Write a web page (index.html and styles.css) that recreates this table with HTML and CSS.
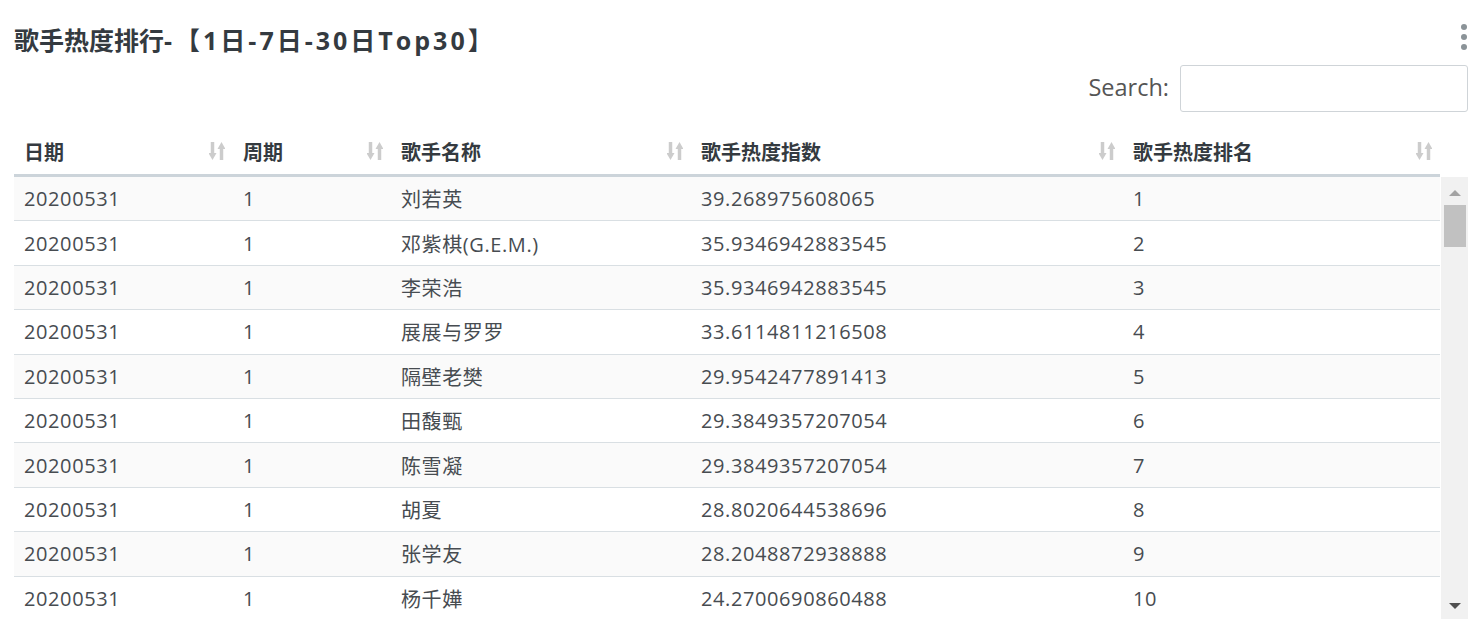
FILE: index.html
```html
<!DOCTYPE html>
<html lang="zh-CN">
<head>
<meta charset="utf-8">
<title>歌手热度排行</title>
<link rel="stylesheet" href="styles.css">
</head>
<body>
<div class="card">
  <div class="card-head">
    <h1 class="title">歌手热度排行<span class="title-range">-【1日-7日-30日Top30】</span></h1>
    <div class="kebab"><span></span><span></span><span></span></div>
  </div>
  <div class="search-row">
    <label class="search-label">Search:</label>
    <input class="search-input" type="text">
  </div>
  <div class="grid-head">
    <div class="hcell">日期<svg class="sort" viewBox="0 0 16 20"><path d="M3.5 1v12" /><path class="fill" d="M-0.5 12h8l-4 7z"/><path d="M12.5 19V7" /><path class="fill" d="M8.5 8h8l-4-7z"/></svg></div>
    <div class="hcell">周期<svg class="sort" viewBox="0 0 16 20"><path d="M3.5 1v12" /><path class="fill" d="M-0.5 12h8l-4 7z"/><path d="M12.5 19V7" /><path class="fill" d="M8.5 8h8l-4-7z"/></svg></div>
    <div class="hcell">歌手名称<svg class="sort" viewBox="0 0 16 20"><path d="M3.5 1v12" /><path class="fill" d="M-0.5 12h8l-4 7z"/><path d="M12.5 19V7" /><path class="fill" d="M8.5 8h8l-4-7z"/></svg></div>
    <div class="hcell">歌手热度指数<svg class="sort" viewBox="0 0 16 20"><path d="M3.5 1v12" /><path class="fill" d="M-0.5 12h8l-4 7z"/><path d="M12.5 19V7" /><path class="fill" d="M8.5 8h8l-4-7z"/></svg></div>
    <div class="hcell">歌手热度排名<svg class="sort" viewBox="0 0 16 20"><path d="M3.5 1v12" /><path class="fill" d="M-0.5 12h8l-4 7z"/><path d="M12.5 19V7" /><path class="fill" d="M8.5 8h8l-4-7z"/></svg></div>
  </div>
  <div class="body-wrap">
    <div class="rows">
      <div class="row odd"><div>20200531</div><div>1</div><div>刘若英</div><div>39.268975608065</div><div>1</div></div>
      <div class="row"><div>20200531</div><div>1</div><div>邓紫棋(G.E.M.)</div><div>35.9346942883545</div><div>2</div></div>
      <div class="row odd"><div>20200531</div><div>1</div><div>李荣浩</div><div>35.9346942883545</div><div>3</div></div>
      <div class="row"><div>20200531</div><div>1</div><div>展展与罗罗</div><div>33.6114811216508</div><div>4</div></div>
      <div class="row odd"><div>20200531</div><div>1</div><div>隔壁老樊</div><div>29.9542477891413</div><div>5</div></div>
      <div class="row"><div>20200531</div><div>1</div><div>田馥甄</div><div>29.3849357207054</div><div>6</div></div>
      <div class="row odd"><div>20200531</div><div>1</div><div>陈雪凝</div><div>29.3849357207054</div><div>7</div></div>
      <div class="row"><div>20200531</div><div>1</div><div>胡夏</div><div>28.8020644538696</div><div>8</div></div>
      <div class="row odd"><div>20200531</div><div>1</div><div>张学友</div><div>28.2048872938888</div><div>9</div></div>
      <div class="row"><div>20200531</div><div>1</div><div>杨千嬅</div><div>24.2700690860488</div><div>10</div></div>
    </div>
    <div class="vscroll">
      <div class="arrow up"></div>
      <div class="thumb"></div>
      <div class="track-fill"></div>
      <div class="arrow down"></div>
    </div>
  </div>
</div>
</body>
</html>
```

FILE: styles.css
```css
html, body {
  margin: 0;
  padding: 0;
  background: #ffffff;
}
body {
  font-family: "Open Sans", "Noto Sans CJK SC", sans-serif;
  color: #444;
  overflow: hidden;
}
.card {
  padding: 0 7px 0 14px;
}
.card-head {
  display: flex;
  justify-content: space-between;
  align-items: flex-start;
  height: 62px;
}
.title {
  margin: 23px 0 0 0;
  font-size: 25px;
  line-height: 34px;
  font-weight: 700;
  color: #343a40;
}
.title-range {
  letter-spacing: 3px;
}
.kebab {
  display: flex;
  flex-direction: column;
  gap: 4px;
  margin-top: 24px;
  margin-right: 1px;
}
.kebab span {
  width: 6px;
  height: 6px;
  border-radius: 50%;
  background: #8b9398;
}
.search-row {
  display: flex;
  justify-content: flex-end;
  align-items: center;
  gap: 11px;
  margin-top: 3px;
}
.search-label {
  font-size: 23.5px;
  color: #555;
  margin-top: -3px;
}
.search-input {
  box-sizing: border-box;
  width: 288px;
  height: 47px;
  border: 1px solid #cfd4d8;
  border-radius: 3px;
  margin: 0;
  padding: 0 10px;
  font-size: 20px;
}
.grid-head, .row {
  display: grid;
  grid-template-columns: 219px 158px 300px 432px 317px;
}
.grid-head {
  margin-top: 15px;
  border-bottom: 3px solid #ccd4da;
  width: 1426px;
  box-sizing: border-box;
  height: 50px;
}
.hcell {
  display: flex;
  align-items: center;
  justify-content: space-between;
  padding: 2px 8px 0 10px;
  font-size: 20px;
  font-weight: 700;
  color: #343a40;
}
.sort {
  width: 16px;
  height: 20px;
  margin-top: -2px;
}
.sort path {
  stroke: #cccccc;
  stroke-width: 3.5;
  fill: none;
}
.sort path.fill {
  stroke: none;
  fill: #cccccc;
}
.body-wrap {
  display: flex;
  height: 442px;
  overflow: hidden;
}
.rows {
  width: 1426px;
  flex: none;
}
.row {
  height: 44.4px;
  box-sizing: border-box;
  border-bottom: 1px solid #d9dfe3;
  align-items: center;
  font-size: 20px;
  letter-spacing: 0.6px;
  color: #474c51;
}
.row.odd {
  background: #fafafa;
}
.row > div {
  padding: 0 10px;
  white-space: nowrap;
}
.vscroll {
  width: 27px;
  margin-left: 1px;
  background: #f1f1f1;
  display: flex;
  flex-direction: column;
  align-items: center;
}
.arrow {
  width: 0;
  height: 0;
  border-left: 6px solid transparent;
  border-right: 6px solid transparent;
}
.arrow.up {
  margin-top: 13px;
  border-bottom: 6px solid #a3a3a3;
}
.arrow.down {
  margin-bottom: 10px;
  border-top: 6px solid #505050;
}
.thumb {
  margin-top: 9px;
  width: 22px;
  height: 42px;
  background: #c1c1c1;
}
.track-fill {
  flex: 1;
}
```
